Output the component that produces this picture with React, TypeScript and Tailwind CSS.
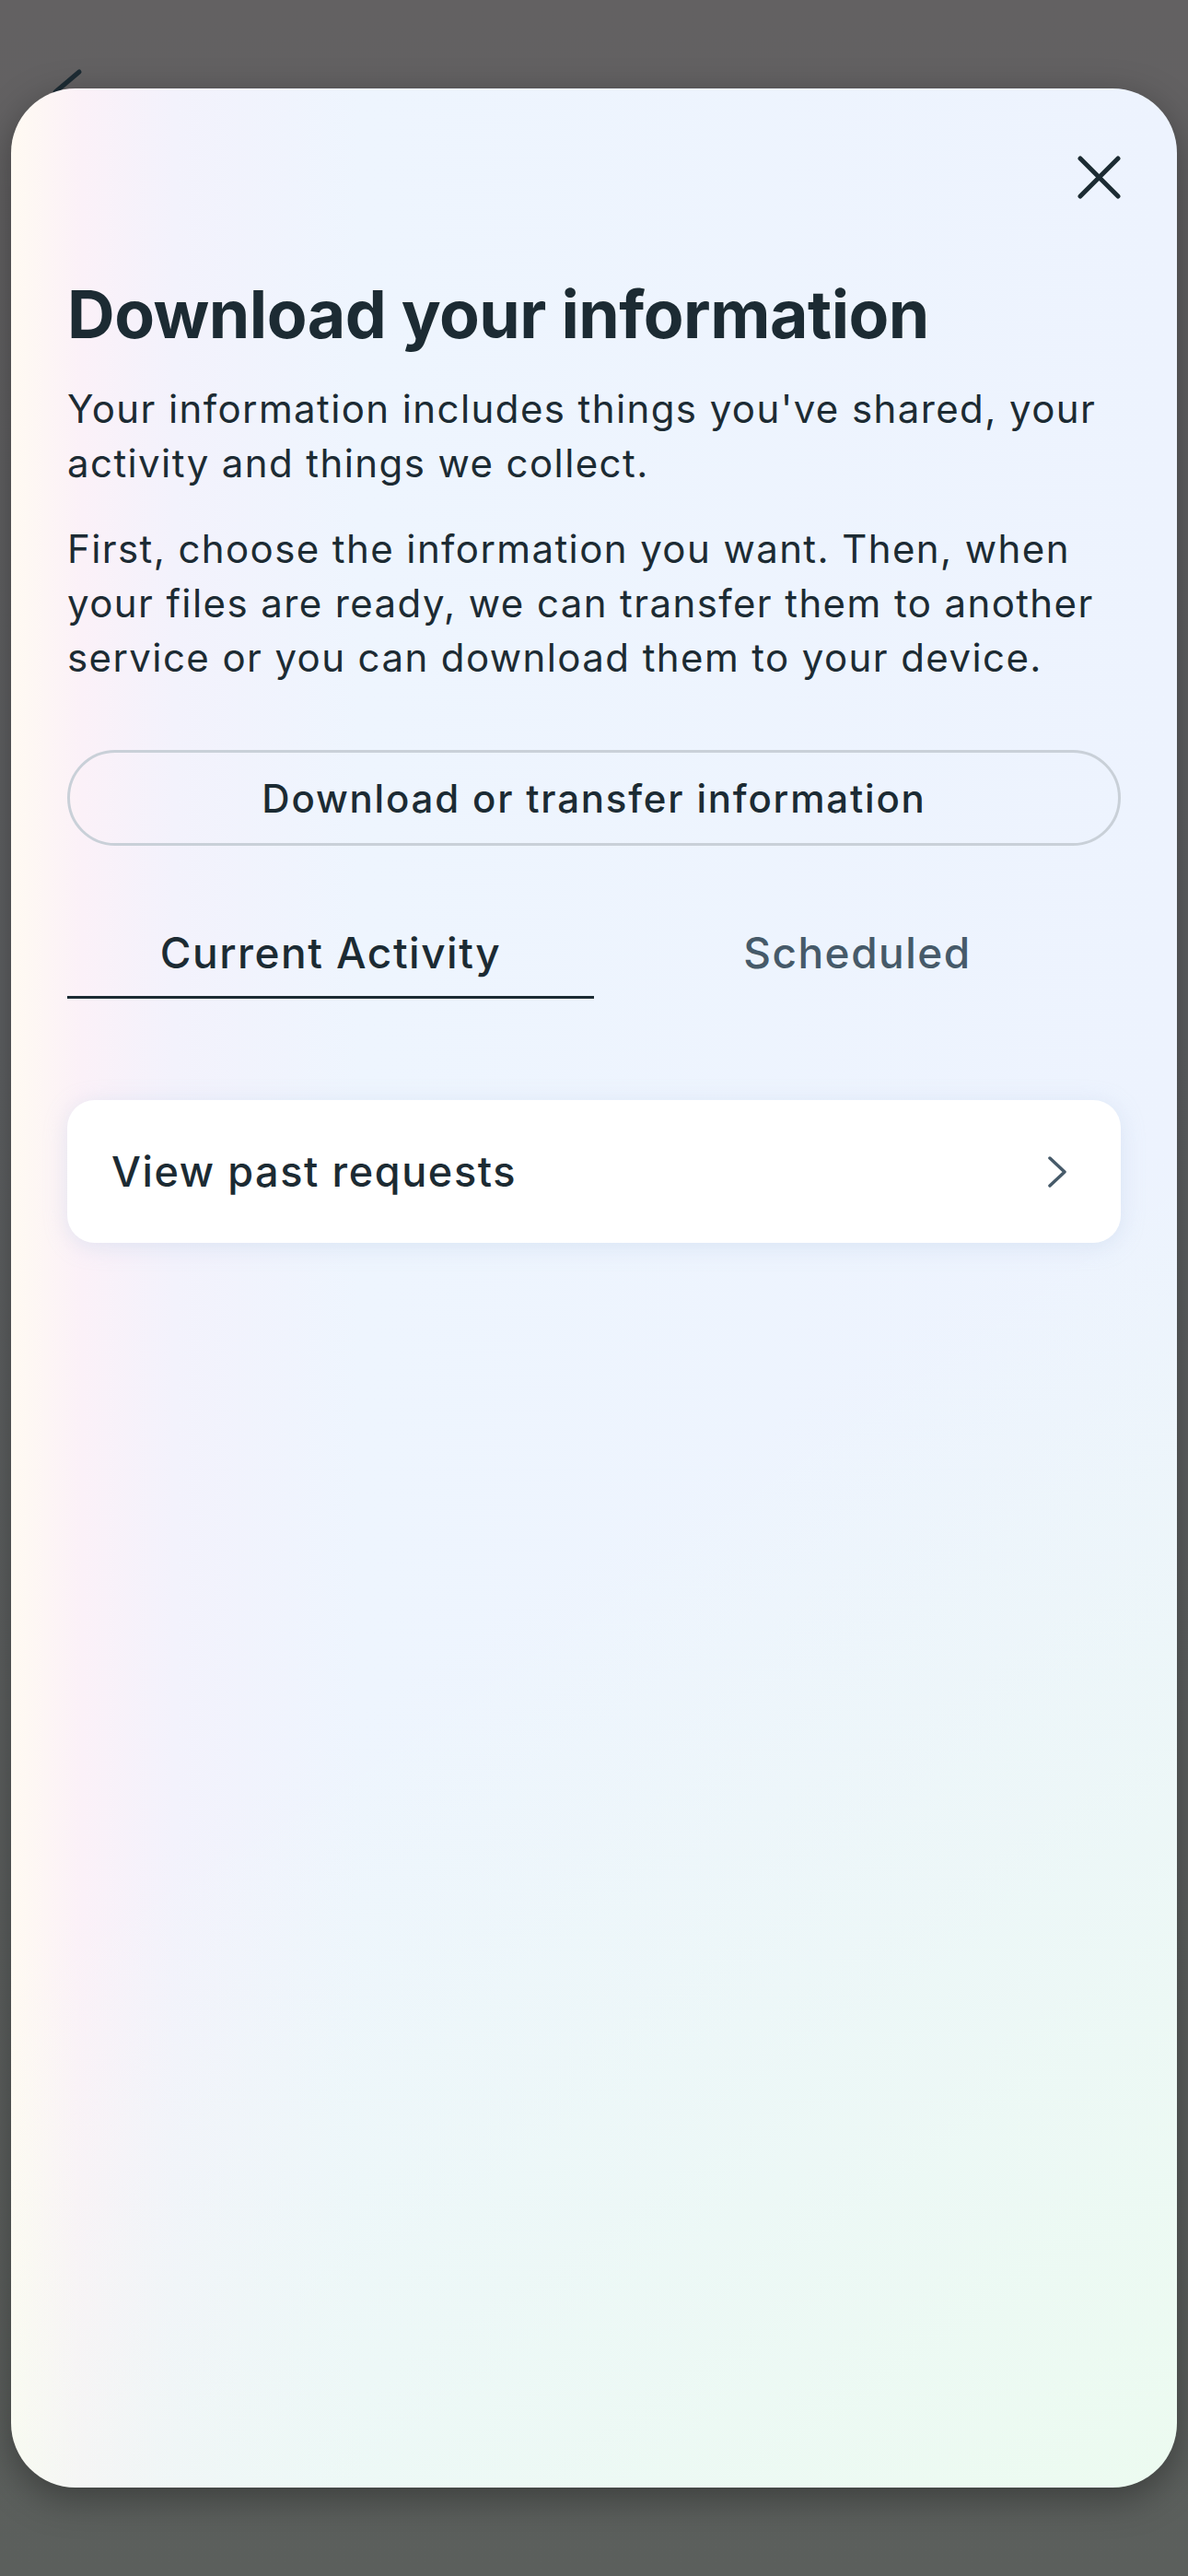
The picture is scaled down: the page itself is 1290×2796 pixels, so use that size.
export default function App() {
  return (
    <div
      className="relative w-[1290px] h-[2796px] overflow-hidden bg-[linear-gradient(to_bottom,#636162,#5f6163_40%,#5b5f5c)] pt-[96px] px-[12px]"
      style={{ fontFamily: "Inter, 'Noto Sans', sans-serif" }}
    >
      {/* back chevron of the page underneath */}
      <svg
        className="absolute left-[52px] top-[70px]"
        width="48"
        height="80"
        viewBox="0 0 48 80"
        fill="none"
      >
        <path d="M34 8 L8 30" stroke="#1c2b33" strokeWidth="5" strokeLinecap="round" />
      </svg>

      <div className="relative h-[2604px] rounded-[70px] overflow-hidden shadow-[0_12px_40px_rgba(0,0,0,0.35)] bg-[linear-gradient(145deg,rgba(236,251,240,0)_58%,#ecfbf0_100%),linear-gradient(to_right,#fffaf2_0%,#fbf1f8_6%,#f3f2fc_14%,#eef5fe_30%,#edf3fe_100%)] px-[61px]">
        <div className="flex justify-end pt-[73px]">
          <svg width="47" height="47" viewBox="0 0 47 47" fill="none">
            <path d="M3 3 L44 44 M44 3 L3 44" stroke="#1c2b33" strokeWidth="5" strokeLinecap="round" />
          </svg>
        </div>

        <h1 className="mt-[85px] text-[71.5px] leading-[80px] font-bold text-[#1c2b33] tracking-[-0.5px]">
          Download your information
        </h1>

        <p className="mt-[33px] text-[42px] leading-[59px] tracking-[1.4px] text-[#1c2b33]">
          Your information includes things you've shared, your activity and things we collect.
        </p>
        <p className="mt-[34px] text-[42px] leading-[59px] tracking-[1.4px] text-[#1c2b33]">
          First, choose the information you want. Then, when your files are ready, we can transfer them to another service or you can download them to your device.
        </p>

        <button className="mt-[71px] w-full h-[104px] rounded-full border-[3px] border-[#c9d0d8] text-[42px] tracking-[1.8px] font-medium text-[#1c2b33]">
          Download or transfer information
        </button>

        <div className="mt-[69px] grid grid-cols-2">
          <div className="flex flex-col">
            <div className="h-[94px] flex items-center justify-center text-[46px] tracking-[1.5px] font-medium text-[#1c2b33]">
              Current Activity
            </div>
            <div className="h-[3px] bg-[#1c2b33]" />
          </div>
          <div className="h-[94px] flex items-center justify-center text-[46px] tracking-[1.5px] font-medium text-[#465a69]">
            Scheduled
          </div>
        </div>

        <div className="mt-[110px] h-[155px] rounded-[30px] bg-white shadow-[0_4px_24px_rgba(180,200,225,0.35)] flex items-center justify-between pl-[48px] pr-[58px]">
          <span className="text-[45px] tracking-[1.6px] font-medium text-[#1c2b33]">View past requests</span>
          <svg width="22" height="36" viewBox="0 0 22 36" fill="none">
            <path d="M3 3 L19 18 L3 33" stroke="#465a69" strokeWidth="3.5" strokeLinecap="round" strokeLinejoin="round" />
          </svg>
        </div>
      </div>
    </div>
  );
}
